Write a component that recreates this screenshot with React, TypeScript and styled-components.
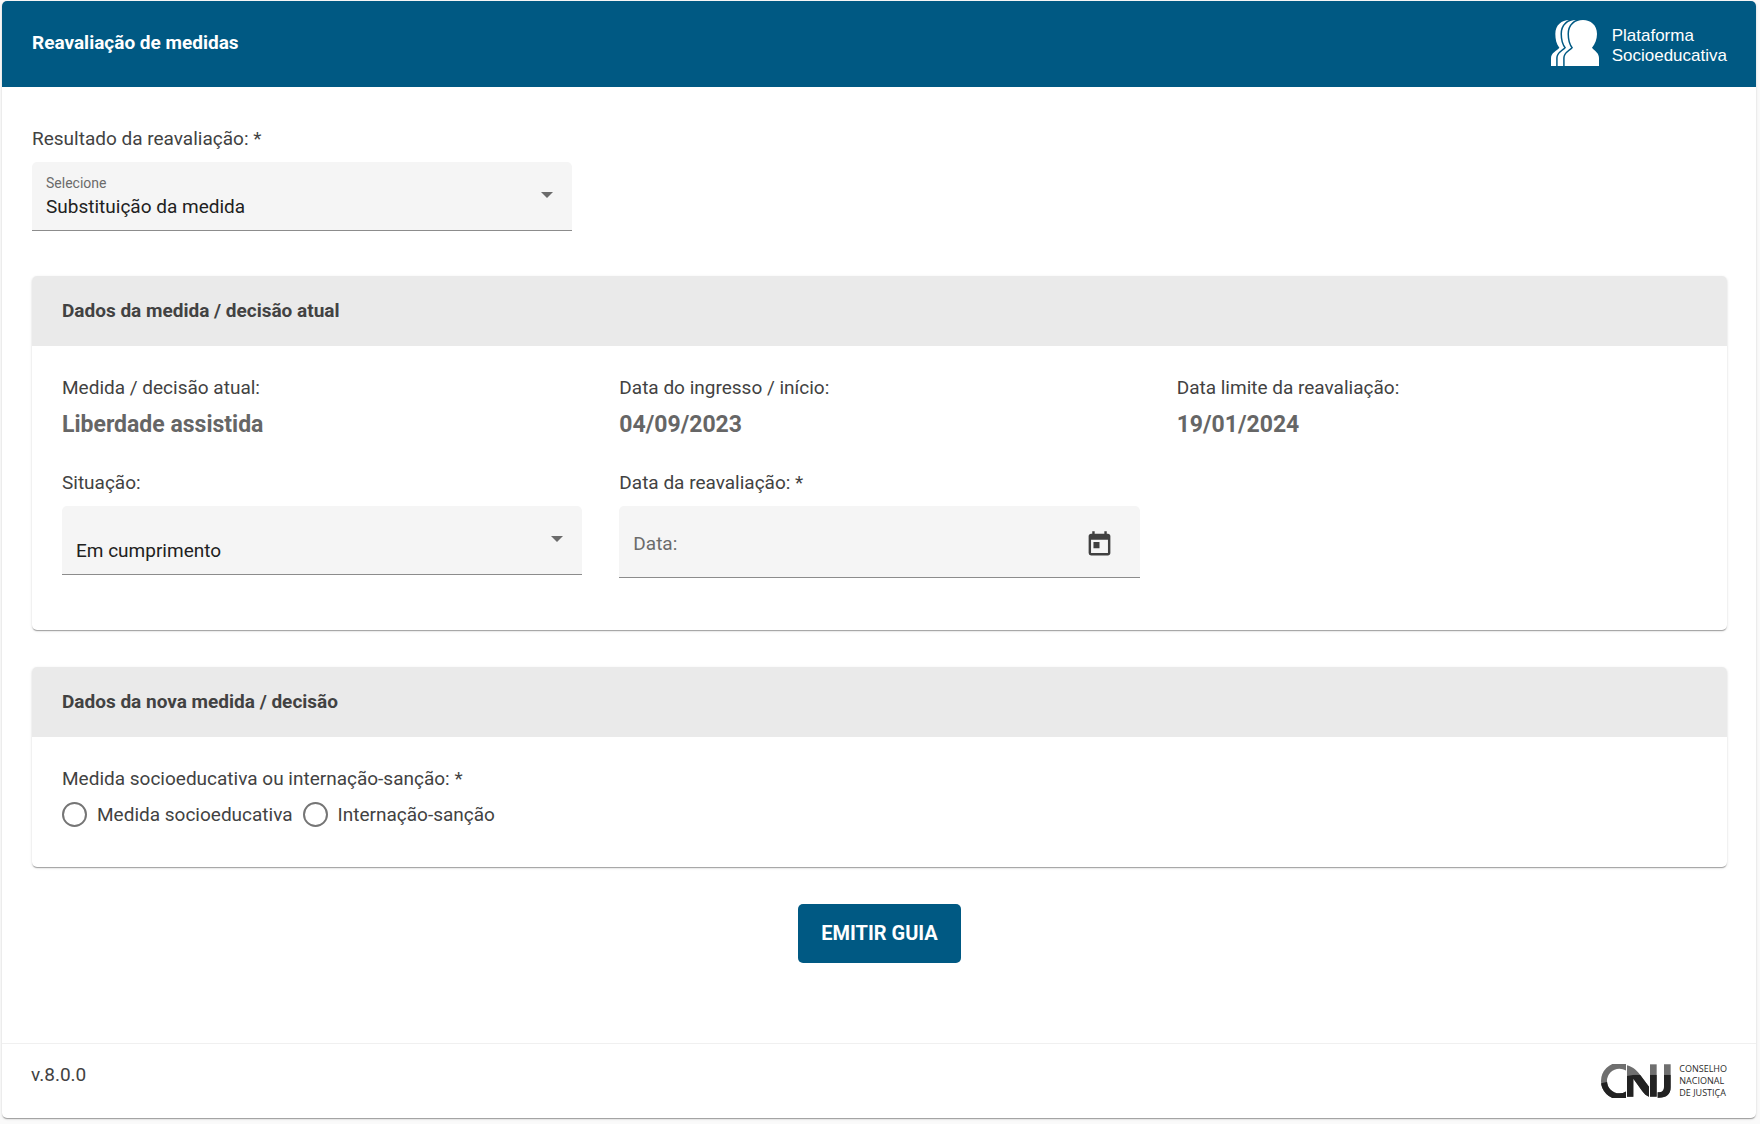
import React from "react";
import styled, { createGlobalStyle } from "styled-components";
import { MdToday } from "react-icons/md";

const GlobalStyle = createGlobalStyle`
  *, *::before, *::after { box-sizing: border-box; }
  body {
    margin: 0;
    background: #fafafa;
    color: #424242;
    font-family: Roboto, "Liberation Sans", sans-serif;
    font-size: 19px;
    line-height: 24px;
  }
`;

const elevation = `
  box-shadow: 0 2px 1px -1px rgba(0, 0, 0, 0.2), 0 1px 1px 0 rgba(0, 0, 0, 0.14),
    0 1px 3px 0 rgba(0, 0, 0, 0.12);
`;

const Page = styled.div`
  margin: 1px 4px 4px 2px;
  display: flex;
  flex-direction: column;
  background: #fff;
  border-radius: 5px;
  ${elevation}
`;

const TopBar = styled.header`
  display: flex;
  justify-content: space-between;
  align-items: center;
  padding: 19px 29px 21px 30px;
  background: #005983;
  color: #fff;
  border-radius: 5px 5px 0 0;
`;

const PageTitle = styled.h1`
  margin: 0;
  font-size: 19px;
  line-height: 24px;
  font-weight: 700;
`;

const Brand = styled.div`
  display: flex;
  align-items: flex-end;
  gap: 13px;
  font-family: "Liberation Sans", Arial, sans-serif;
  font-size: 17px;
  line-height: 20px;
`;

const Form = styled.form`
  padding: 40px 29px 80px 30px;
  display: flex;
  flex-direction: column;
`;

const Columns = styled.div`
  display: grid;
  grid-template-columns: repeat(3, minmax(0, 1fr));
  gap: 32px 37px;
  align-items: start;
`;

const Field = styled.div`
  display: flex;
  flex-direction: column;
  gap: 11px;
`;

const Label = styled.label`
  line-height: 24px;
`;

const Control = styled.div<{ $height: number }>`
  position: relative;
  height: ${(p) => p.$height}px;
  display: flex;
  align-items: center;
  background: #f5f5f5;
  border-bottom: 1px solid #8c8c8c;
  border-radius: 5px 5px 0 0;
`;

const Hint = styled.span`
  position: absolute;
  top: 12px;
  left: 14px;
  font-size: 14px;
  line-height: 18px;
  color: #6b6b6b;
  pointer-events: none;
`;

const Select = styled.select`
  appearance: none;
  width: 100%;
  height: 100%;
  padding: 21px 44px 0 14px;
  border: 0;
  background: transparent;
  color: #212121;
  font: inherit;
`;

const Arrow = styled.svg`
  position: absolute;
  top: 30px;
  right: 19px;
  pointer-events: none;
`;

const DateInput = styled.input`
  flex: 1;
  min-width: 0;
  height: 100%;
  padding: 4px 14px 0;
  border: 0;
  background: transparent;
  color: #212121;
  font: inherit;
  &::placeholder {
    color: #6b6b6b;
    opacity: 1;
  }
`;

const IconButton = styled.button`
  margin: 5px 26px 0 0;
  padding: 0;
  border: 0;
  display: flex;
  background: transparent;
  color: #404040;
  font-size: 29px;
`;

const Card = styled.section`
  margin-top: 37px;
  background: #fff;
  border-radius: 5px;
  ${elevation}
`;

const FirstCard = styled(Card)`
  margin-top: 45px;
`;

const CardTitle = styled.h2`
  margin: 0;
  padding: 23px 30px;
  background: #eaeaea;
  border-radius: 5px 5px 0 0;
  font-size: 19px;
  line-height: 24px;
  font-weight: 700;
`;

const CardBody = styled.div<{ $bottom: number }>`
  padding: 30px 30px ${(p) => p.$bottom}px;
`;

const Value = styled.strong`
  font-size: 23px;
  line-height: 28px;
  font-weight: 700;
  color: #666;
`;

const RadioGroup = styled.fieldset`
  margin: 0;
  padding: 0;
  border: 0;
`;

const Legend = styled.legend`
  padding: 0;
  margin-bottom: 11px;
`;

const RadioRow = styled.div`
  display: flex;
  gap: 10px;
`;

const RadioLabel = styled.label`
  display: flex;
  align-items: center;
  gap: 10px;
`;

const Radio = styled.input`
  appearance: none;
  margin: 0;
  width: 25px;
  height: 25px;
  border: 2px solid #757575;
  border-radius: 50%;
  &:checked {
    background: radial-gradient(#005983 45%, transparent 50%);
    border-color: #005983;
  }
`;

const Submit = styled.button`
  align-self: center;
  margin-top: 37px;
  padding: 17px 23px 18px;
  border: 0;
  border-radius: 5px;
  background: #005983;
  color: #fff;
  font: inherit;
  font-size: 20px;
  font-weight: 700;
`;

const Footer = styled.footer`
  display: flex;
  justify-content: space-between;
  align-items: flex-start;
  padding: 19px 29px;
  border-top: 1px solid #f0f0f0;
`;

const Institution = styled.div`
  display: flex;
  align-items: center;
  gap: 8px;
  font-family: "Open Sans", "Noto Sans", sans-serif;
  font-size: 9px;
  line-height: 12px;
  color: #2b2b2b;
`;

const profile =
  "M41 138V114C41 98 58 93 66 83C57 72 54 58 54 42C54 15 73 0 96 0C119 0 138 15 138 42C138 58 132 72 123 83C131 93 144 98 144 114V138Z";

function PeopleMark() {
  return (
    <svg width="48" height="46" viewBox="0 0 144 138" aria-hidden="true">
      {[-41, -21, 0].map((shift) => (
        <g key={shift} transform={`translate(${shift} 0)`}>
          <path d={profile} fill="none" stroke="#005983" strokeWidth="9" />
          <path d={profile} fill="#fff" />
        </g>
      ))}
    </svg>
  );
}

function CnjMark() {
  return (
    <svg width="70" height="34" viewBox="0 0 210 102" role="img" aria-label="CNJ">
      <defs>
        <clipPath id="ringCut">
          <rect x="0" y="0" width="75" height="102" />
        </clipPath>
        <clipPath id="lowerTone">
          <path d="M0 58C30 52 50 46 78 36L100 32H210V102H0Z" />
        </clipPath>
        <g id="mark">
          <circle cx="55" cy="51" r="46" fill="none" strokeWidth="18" clipPath="url(#ringCut)" />
          <path stroke="none" d="M78 4C98 10 108 20 120 36L144 68V98C136 96 130 90 124 82L97 44V98H78Z" />
          <rect stroke="none" x="147" y="1" width="20" height="97" />
          <path stroke="none" d="M189 1H209V70C209 92 196 102 170 101V85C184 85 189 80 189 68Z" />
        </g>
      </defs>
      <use href="#mark" fill="#6f6f6f" stroke="#6f6f6f" />
      <g clipPath="url(#lowerTone)">
        <use href="#mark" fill="#222" stroke="#222" />
      </g>
    </svg>
  );
}

function DropArrow() {
  return (
    <Arrow width="12" height="6" viewBox="0 0 12 6" aria-hidden="true">
      <path d="M0 0H12L6 6Z" fill="#6b6b6b" />
    </Arrow>
  );
}

export default function App() {
  return (
    <>
      <GlobalStyle />
      <Page>
        <TopBar>
          <PageTitle>Reavaliação de medidas</PageTitle>
          <Brand>
            <PeopleMark />
            <span>
              Plataforma
              <br />
              Socioeducativa
            </span>
          </Brand>
        </TopBar>

        <Form onSubmit={(e) => e.preventDefault()}>
          <Columns>
            <Field>
              <Label htmlFor="resultado">Resultado da reavaliação: *</Label>
              <Control $height={69}>
                <Hint>Selecione</Hint>
                <Select id="resultado" defaultValue="substituicao">
                  <option value="substituicao">Substituição da medida</option>
                </Select>
                <DropArrow />
              </Control>
            </Field>
          </Columns>

          <FirstCard>
            <CardTitle>Dados da medida / decisão atual</CardTitle>
            <CardBody $bottom={52}>
              <Columns>
                <Field>
                  <span>Medida / decisão atual:</span>
                  <Value>Liberdade assistida</Value>
                </Field>
                <Field>
                  <span>Data do ingresso / início:</span>
                  <Value>04/09/2023</Value>
                </Field>
                <Field>
                  <span>Data limite da reavaliação:</span>
                  <Value>19/01/2024</Value>
                </Field>
                <Field>
                  <Label htmlFor="situacao">Situação:</Label>
                  <Control $height={69}>
                    <Select id="situacao" defaultValue="cumprimento">
                      <option value="cumprimento">Em cumprimento</option>
                    </Select>
                    <DropArrow />
                  </Control>
                </Field>
                <Field>
                  <Label htmlFor="data">Data da reavaliação: *</Label>
                  <Control $height={72}>
                    <DateInput id="data" type="text" placeholder="Data:" />
                    <IconButton type="button" aria-label="Abrir calendário">
                      <MdToday />
                    </IconButton>
                  </Control>
                </Field>
              </Columns>
            </CardBody>
          </FirstCard>

          <Card>
            <CardTitle>Dados da nova medida / decisão</CardTitle>
            <CardBody $bottom={40}>
              <RadioGroup>
                <Legend>Medida socioeducativa ou internação-sanção: *</Legend>
                <RadioRow>
                  <RadioLabel>
                    <Radio type="radio" name="tipo" value="medida" />
                    Medida socioeducativa
                  </RadioLabel>
                  <RadioLabel>
                    <Radio type="radio" name="tipo" value="internacao" />
                    Internação-sanção
                  </RadioLabel>
                </RadioRow>
              </RadioGroup>
            </CardBody>
          </Card>

          <Submit type="submit">EMITIR GUIA</Submit>
        </Form>

        <Footer>
          <span>v.8.0.0</span>
          <Institution>
            <CnjMark />
            <span>
              CONSELHO
              <br />
              NACIONAL
              <br />
              DE JUSTIÇA
            </span>
          </Institution>
        </Footer>
      </Page>
    </>
  );
}
